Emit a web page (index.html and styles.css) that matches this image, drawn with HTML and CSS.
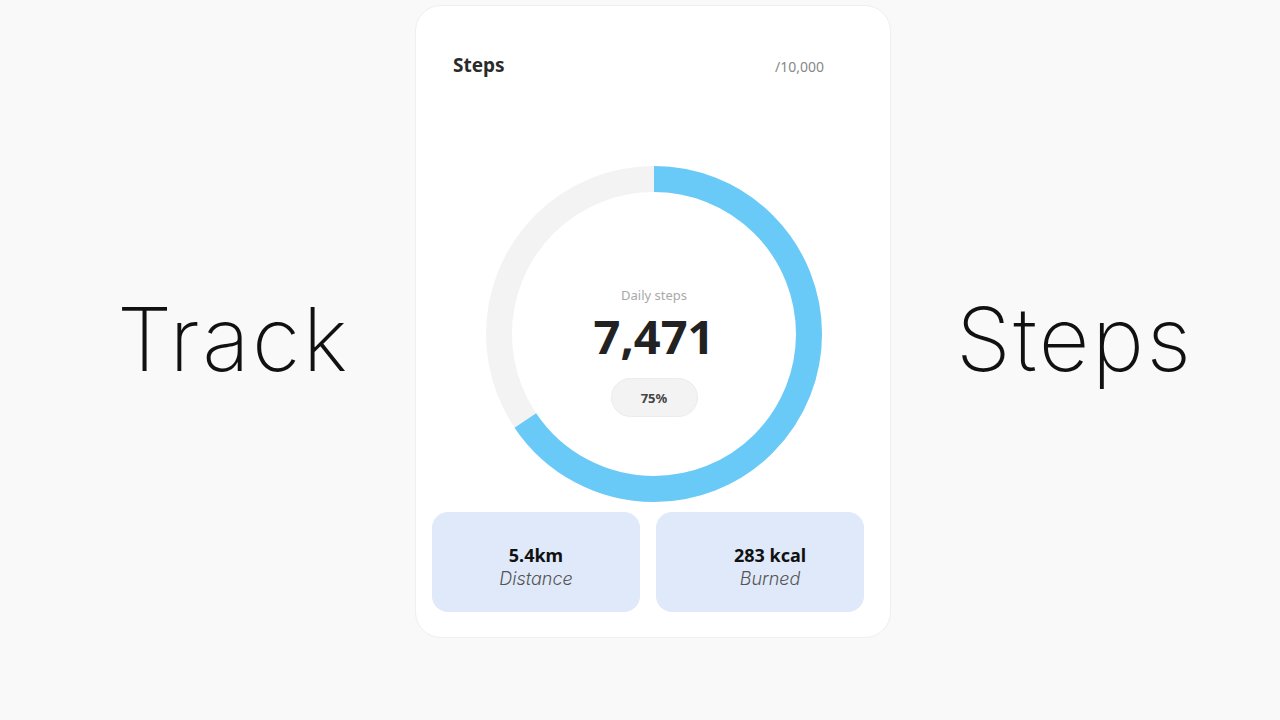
FILE: index.html
```html
<!DOCTYPE html>
<html lang="en">
<head>
  <meta charset="UTF-8">
  <title>Track Steps</title>
  <link rel="stylesheet" href="styles.css">
</head>
<body>
  <div class="stage">
    <div class="word word-left">Track</div>

    <div class="card">
      <div class="card-head">
        <span class="card-title">Steps</span>
        <span class="card-goal">/10,000</span>
      </div>

      <div class="ring">
        <svg class="ring-svg" width="336" height="336" viewBox="0 0 336 336">
          <circle class="ring-track" cx="168" cy="168" r="155"></circle>
          <!-- progress arc, starts at 12 o'clock -->
          <circle class="ring-bar" cx="168" cy="168" r="155"
                  stroke-dasharray="638.5 973.9" transform="rotate(-90 168 168)"></circle>
        </svg>
        <div class="ring-info">
          <div class="ring-label">Daily steps</div>
          <div class="ring-value">7,471</div>
          <div class="ring-pill">75%</div>
        </div>
      </div>

      <div class="tiles">
        <div class="tile">
          <div class="tile-value">5.4km</div>
          <div class="tile-label">Distance</div>
        </div>
        <div class="tile tile-right">
          <div class="tile-value">283 kcal</div>
          <div class="tile-label">Burned</div>
        </div>
      </div>
    </div>

    <div class="word word-right">Steps</div>
  </div>
</body>
</html>
```

FILE: styles.css
```css
html,
body {
  margin: 0;
  padding: 0;
}
body {
  background-color: #f9f9f9;
  font-family: "Inter", "Noto Sans", sans-serif;
  color: #222;
}
.stage {
  display: grid;
  grid-template-columns: 415px 476px 1fr;
  align-items: start;
  height: 720px;
  padding-top: 5px;
  box-sizing: border-box;
}
.word {
  font-family: "Inter", sans-serif;
  font-weight: 200;
  font-size: 88px;
  line-height: 1;
  color: #111;
  margin-top: 290px;
  letter-spacing: 2.5px;
}
.word-left {
  padding-left: 117px;
}
.word-right {
  padding-left: 65px;
}
.card {
  height: 633px;
  box-sizing: border-box;
  background-color: #fff;
  border: 1px solid #efefef;
  border-radius: 26px;
  display: flex;
  flex-direction: column;
}
.card-head {
  display: flex;
  justify-content: space-between;
  align-items: center;
  padding: 46px 66px 0 37px;
}
.card-title {
  font-family: "Noto Sans", sans-serif;
  font-weight: 700;
  font-size: 19px;
  color: #2b2b2b;
}
.card-goal {
  font-family: "Noto Sans", sans-serif;
  font-size: 14px;
  color: #888;
  padding-top: 2px;
}
.ring {
  display: grid;
  justify-content: center;
  margin-top: 88px;
  margin-left: 2px;
}
.ring-svg,
.ring-info {
  grid-area: 1 / 1;
}
.ring-track,
.ring-bar {
  fill: none;
  stroke-width: 26;
}
.ring-track {
  stroke: #f3f3f3;
}
.ring-bar {
  stroke: #69caf8;
}
.ring-info {
  display: flex;
  flex-direction: column;
  align-items: center;
  padding-top: 121px;
}
.ring-label {
  font-family: "Noto Sans", sans-serif;
  font-size: 13px;
  line-height: 16px;
  color: #a9a9a9;
}
.ring-value {
  font-family: "Noto Sans", sans-serif;
  font-weight: 700;
  font-size: 47px;
  line-height: 50px;
  color: #222;
  margin-top: 8px;
}
.ring-pill {
  margin-top: 17px;
  width: 87px;
  height: 39px;
  box-sizing: border-box;
  border: 1px solid #ececec;
  border-radius: 20px;
  background-color: #f3f3f3;
  font-family: "Noto Sans", sans-serif;
  font-weight: 700;
  font-size: 13px;
  color: #444;
  display: flex;
  align-items: center;
  justify-content: center;
}
.tiles {
  display: grid;
  grid-template-columns: 1fr 1fr;
  gap: 16px;
  padding: 0 26px 0 16px;
  margin-top: auto;
  margin-bottom: 25px;
}
.tile {
  height: 100px;
  border-radius: 16px;
  background-color: #dfe9f9;
  display: flex;
  flex-direction: column;
  align-items: center;
  justify-content: center;
  padding-top: 10px;
  box-sizing: border-box;
}
.tile-right {
  padding-left: 20px;
}
.tile-value {
  font-family: "Noto Sans", sans-serif;
  font-weight: 700;
  font-size: 18px;
  line-height: 24px;
  color: #111;
}
.tile-label {
  font-family: "Inter", sans-serif;
  font-weight: 300;
  font-style: italic;
  font-size: 18px;
  line-height: 24px;
  color: #555;
}
```
